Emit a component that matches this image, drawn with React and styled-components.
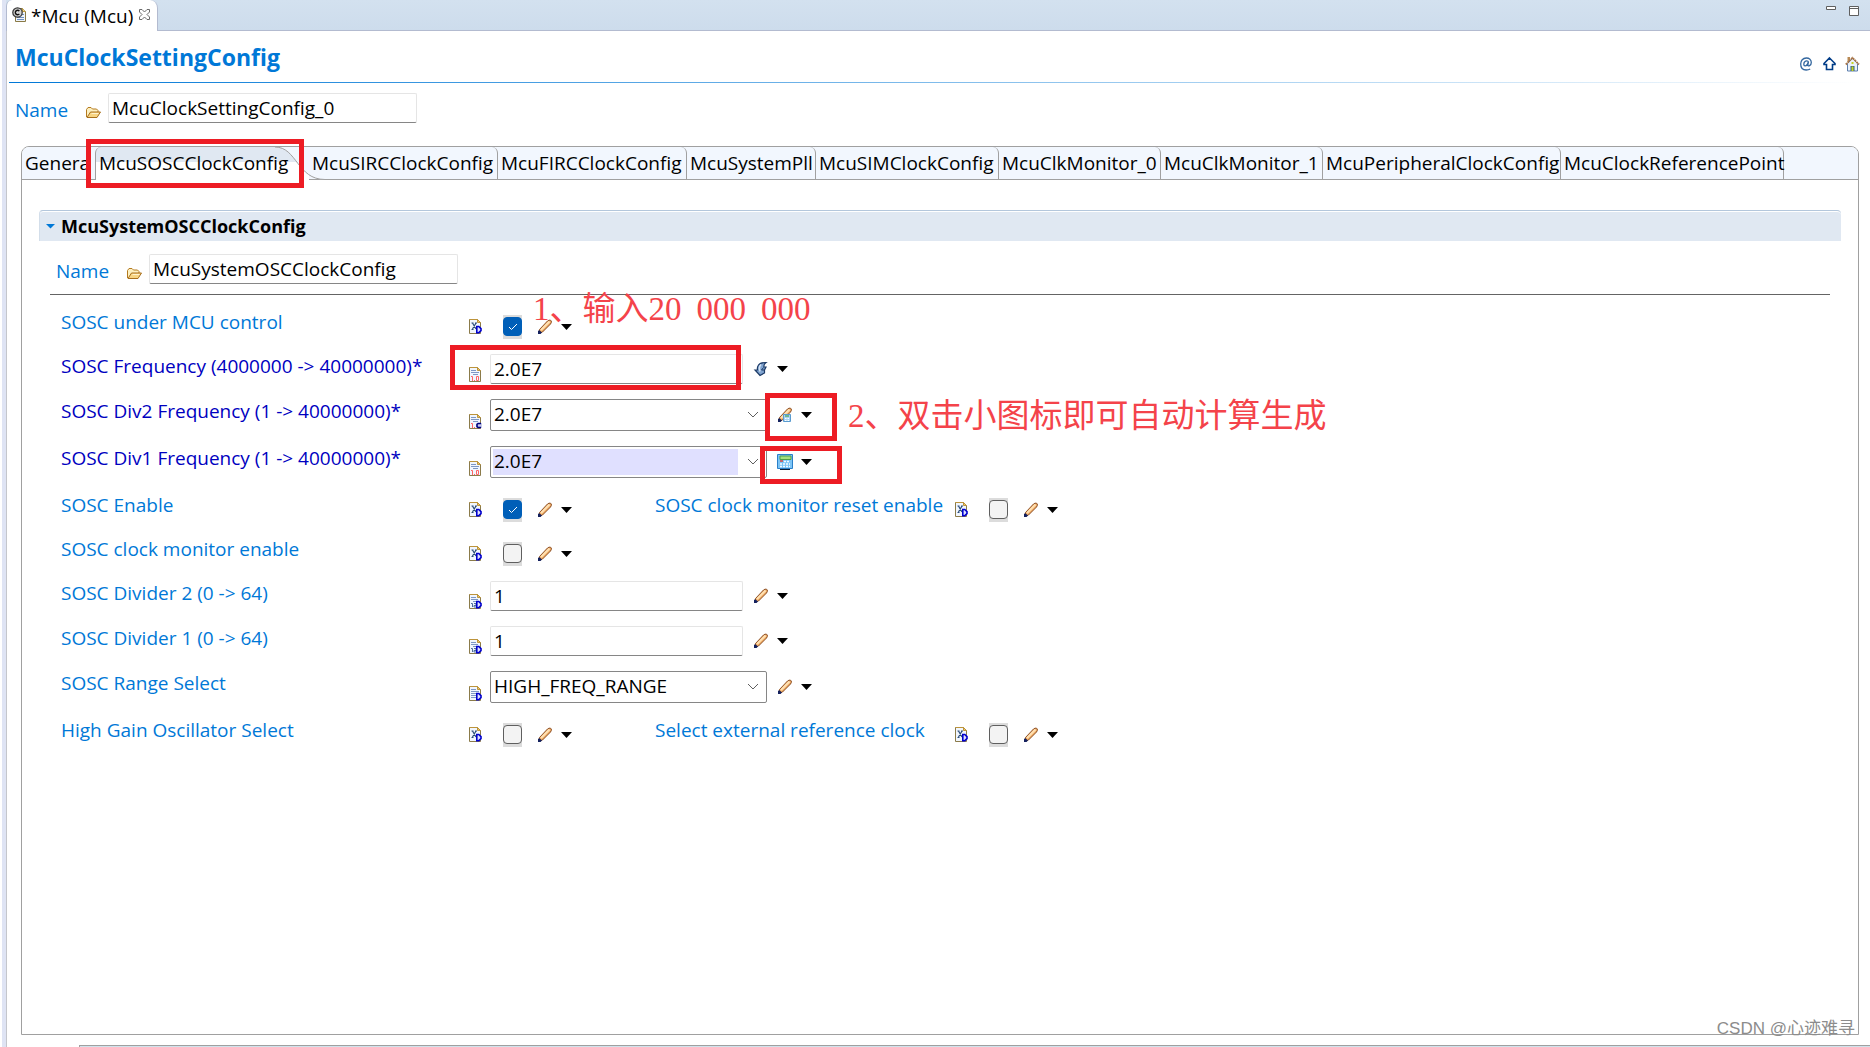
// src/App.jsx
import React, { useState } from "react";
import styled, { createGlobalStyle, ThemeProvider } from "styled-components";

const theme = {
  link: "#0078d7",
  required: "#0000c0",
  border: "#a0a0a0",
  tabBg: "#f2f7fe",
  tabActive: "#e0e8f2",
  mark: "#ed1c24",
  note: "#f4434a",
};

const GlobalStyle = createGlobalStyle`
  * {
    box-sizing: border-box;
  }

  body {
    margin: 0;
    background: #fff;
    color: #000;
    font-family: "Open Sans", "Noto Sans", "Noto Sans CJK SC", sans-serif;
    font-size: 19px;
    line-height: 28px;
  }

  button, input, select {
    font: inherit;
    color: inherit;
  }
`;

/* ---------- page frame ---------- */

const Page = styled.div`
  min-height: 100vh;
  display: flex;
  flex-direction: column;
  border-left: 2px solid #fff;
  overflow: hidden;
`;

const Editor = styled.main`
  flex: 1;
  display: flex;
  flex-direction: column;
  border-left: 4px solid #dfe4f4;
`;

const EditorBody = styled.div`
  flex: 1;
  display: flex;
  flex-direction: column;
  border-left: 1px solid #c4c6cc;
`;

const EditorBar = styled.div`
  display: flex;
  justify-content: space-between;
  height: 31px;
  background: linear-gradient(#d3e1ef, #cddcec);
  border-bottom: 1px solid #b3bbd0;
`;

const EditorTab = styled.div`
  display: flex;
  align-items: center;
  gap: 4px;
  width: 152px;
  height: 31px;
  padding: 0 0 2px 5px;
  background: #fff;
  border: 1px solid #b3bbd0;
  border-width: 0 1px 0 1px;
  border-radius: 6px 8px 0 0;
`;

const EditorName = styled.span`
  width: 104px;
  padding-top: 2px;
  white-space: nowrap;
`;

const IconButton = styled.button`
  display: flex;
  flex: none;
  padding: 0;
  border: 0;
  background: none;
  cursor: pointer;
`;

const WindowButtons = styled.div`
  display: flex;
  gap: 13px;
  padding: 6px 11px 0 0;
`;

const TitleRow = styled.header`
  display: flex;
  justify-content: space-between;
  height: 51px;
  padding: 8px 10px 0 8px;
`;

const Title = styled.h1`
  margin: 0;
  color: ${({ theme }) => theme.link};
  font-size: 23px;
  font-weight: 700;
  line-height: 36px;
`;

const TitleTools = styled.div`
  display: flex;
  gap: 8px;
  padding-top: 17px;
`;

const TitleRule = styled.div`
  height: 1px;
  margin: 0 10px 0 2px;
  background: linear-gradient(to right, ${({ theme }) => theme.link}, #fff);
`;

const StatusStrip = styled.div`
  height: 2px;
  margin: 10px 0 0 72px;
  border-top: 1px solid #a0a0a0;
  border-left: 1px solid #a0a0a0;
  background: #cfe3ec;
`;

/* ---------- name line ---------- */

const NameRow = styled.div`
  display: flex;
  gap: 7px;
  height: 30px;
  margin: ${({ $inner }) => ($inner ? "13px 0 0 17px" : "10px 0 0 8px")};
`;

const NameLabel = styled.label`
  width: 64px;
  padding-top: 3px;
  color: ${({ theme }) => theme.link};
`;

const NameIcon = styled.span`
  display: flex;
  width: 15px;
  padding-top: 13px;
`;

const TextBox = styled.input`
  width: ${({ $wide }) => ($wide ? "309px" : "253px")};
  height: 30px;
  padding: 0 3px 1px;
  border: 1px solid #e5e5e5;
  border-bottom-color: #868686;
  border-radius: 2px;
  background: #fff;
  outline: none;
`;

/* ---------- tab folder ---------- */

const Folder = styled.div`
  flex: 1;
  display: flex;
  flex-direction: column;
  margin: 23px 11px 0 14px;
  border: 1px solid ${({ theme }) => theme.border};
  border-radius: 8px 8px 0 0;
`;

const TabBar = styled.div`
  display: flex;
  height: 33px;
  border-bottom: 1px solid ${({ theme }) => theme.border};
  border-radius: 7px 7px 0 0;
  background: ${({ theme }) => theme.tabBg};
`;

const Tab = styled.button`
  position: relative;
  flex: none;
  width: ${({ $width }) => $width}px;
  height: 32px;
  padding: 0 0 1px 3px;
  border: 0;
  border-right: 1px solid ${({ theme }) => theme.border};
  border-top-right-radius: 6px;
  background: none;
  text-align: left;
  white-space: nowrap;
  cursor: pointer;
`;

const CutTab = styled(Tab)`
  flex: none;
  margin-right: 7px;
  border-right: 0;
  overflow: hidden;
`;

const ActiveTab = styled(Tab)`
  height: 33px;
  padding-bottom: 2px;
  border-right: 0;
  border-left: 1px solid ${({ theme }) => theme.border};
  border-top-left-radius: 6px;
  background: linear-gradient(
    ${({ theme }) => theme.tabActive} 15px,
    #fff 15px
  );
`;

const TabCurve = styled.svg`
  position: absolute;
  top: 0;
  right: -16px;
`;

const TabText = styled.span`
  position: relative;
`;

const Mark = styled.span`
  position: absolute;
  z-index: 2;
  left: ${({ $left }) => $left}px;
  top: ${({ $top }) => $top}px;
  width: ${({ $width }) => $width}px;
  height: ${({ $height }) => $height}px;
  border: 5px solid ${({ theme }) => theme.mark};
  pointer-events: none;
`;

const Note = styled.span`
  position: absolute;
  z-index: 3;
  left: ${({ $left }) => $left}px;
  top: ${({ $top }) => $top}px;
  display: flex;
  gap: 15px;
  color: ${({ theme }) => theme.note};
  font-family: "Liberation Serif", "Noto Sans CJK SC", serif;
  font-size: 33px;
  line-height: 36px;
  white-space: nowrap;
  pointer-events: none;
`;

/* ---------- section ---------- */

const Section = styled.section`
  padding: 30px 17px 0 17px;
`;

const SectionHead = styled.h2`
  display: flex;
  align-items: center;
  gap: 6px;
  height: 31px;
  margin: 0;
  padding-left: 6px;
  border-top: 1px solid #b4c7dc;
  border-left: 1px solid #d3deea;
  border-radius: 4px 4px 0 0;
  background: ${({ theme }) => theme.tabActive};
  box-shadow: inset 0 1px #fff;
  font-size: 18px;
  font-weight: 700;
`;

const Rule = styled.hr`
  height: 1px;
  margin: 10px 11px 8px;
  border: 0;
  background: #646464;
`;

const rowHeights = { check: 44, text: 45, combo: 47 };

const Row = styled.div`
  display: flex;
  height: ${({ $kind }) => rowHeights[$kind]}px;
  padding-left: 22px;
`;

const Label = styled.label`
  flex: none;
  width: ${({ $second }) => ($second ? 300 : 408)}px;
  padding-top: 5px;
  color: ${({ theme, $required }) => ($required ? theme.required : theme.link)};
  white-space: nowrap;
`;

const Control = styled.div`
  position: relative;
  display: flex;
  align-items: flex-start;
  flex: none;
  min-width: 186px;
  padding-top: 7px;
`;

const docOffsets = { check: 9, text: 13, combo: 15 };

const DocIcon = styled.span`
  display: flex;
  width: 21px;
  padding-top: ${({ $kind }) => docOffsets[$kind]}px;
`;

const toolMargins = {
  check: "9px 0 0 15px",
  text: "7px 0 0 10px",
  combo: "8px 0 0 10px",
};

const Tools = styled.span`
  display: flex;
  align-items: center;
  gap: 8px;
  height: 16px;
  margin: ${({ $kind }) => toolMargins[$kind]};
`;

const CheckWrap = styled.span`
  position: relative;
  display: flex;
  width: 19px;
  height: 24px;
  margin: 5px 0 0 13px;
  padding-top: 2px;
  background: #dcdcdc;
`;

const CheckBox = styled.input`
  appearance: none;
  width: 19px;
  height: 19px;
  margin: 0;
  border: 1px solid #5f5f5f;
  border-radius: 4px;
  background: #f3f3f3;

  &:checked {
    border-color: #005fb8;
    background: #005fb8;
  }
`;

const CheckTick = styled.svg`
  position: absolute;
  left: 5px;
  top: 8px;
  pointer-events: none;
`;

const ComboWrap = styled.span`
  position: relative;
  display: flex;
`;

const Combo = styled.select`
  appearance: none;
  width: 277px;
  height: 32px;
  padding: 0 30px 2px 3px;
  border: 1px solid #868686;
  border-radius: 2px;
  outline: none;
  background: ${({ $picked }) =>
    $picked
      ? "linear-gradient(#e0e0ff, #e0e0ff) 2px 2px / 245px 26px no-repeat #fff"
      : "#fff"};
`;

const ComboArrow = styled.svg`
  position: absolute;
  right: 8px;
  top: 12px;
  pointer-events: none;
`;

const Watermark = styled.span`
  position: absolute;
  right: 15px;
  bottom: 5px;
  color: #8c8c8c;
  font-family: "Liberation Sans", "Noto Sans CJK SC", sans-serif;
  font-size: 17px;
  line-height: 26px;
`;

/* ---------- icons ---------- */

const FileIcon = () => (
  <svg width="15" height="16" viewBox="0 0 15 16">
    <path d="M3.500 1.500h7l3 3v10h-10z" fill="#eef3fb" stroke="#8a7a45" />
    <path d="M10.500 1.500v3h3" fill="#f3d98b" stroke="#c19a3c" />
    <path d="M5 10.500h7M5 12.500h7M10 7.500h2" stroke="#6e8fc0" />
    <circle cx="5.500" cy="5.500" r="4.700" fill="#d4d4d4" stroke="#3b3b3b" strokeWidth="1.300" />
    <path d="M7.300 4.200a2.200 2.200 0 1 0 0 2.600" fill="none" stroke="#111" strokeWidth="1.400" />
  </svg>
);

const CloseIcon = () => (
  <svg width="11" height="11" viewBox="0 0 11 11">
    <path
      d="M.5.5h2.500L5.500 3 8 .5h2.500V3L8 5.500 10.500 8v2.500H8L5.500 8 3 10.500H.5V8L3 5.500.5 3z"
      fill="#fff"
      stroke="#6a6a6a"
    />
  </svg>
);

const FolderIcon = () => (
  <svg width="15" height="13" viewBox="0 0 15 13">
    <path d="M.5 11v-7.500l1.500-2h3l1.500 1.500h4l1.500 1.500v1.500" fill="#fdf0c0" stroke="#b47a1f" />
    <path d="M1 11.500l3.500-5.500h10l-3.500 5.500z" fill="#f8d583" stroke="#a86f1c" />
    <path d="M5.500 7.500h7" stroke="#fff3cf" />
  </svg>
);

const AtIcon = () => (
  <svg width="15" height="16" viewBox="0 0 15 16">
    <path
      d="M9.500 5.500c-3-1.500-4.700.5-4.700 2.700s2 2.300 3.500.3l1.200-3-.7 3.500c0 1.700 3.500.8 3.500-2.500 0-3-2-4.500-5-4.500C3.800 2 1.700 4.600 1.700 8s2 6 5.500 6c1.600 0 3-.4 4-1"
      fill="none"
      stroke="#33679f"
      strokeWidth="1.300"
    />
  </svg>
);

const UpIcon = () => (
  <svg width="15" height="16" viewBox="0 0 15 16">
    <path d="M7.500 2L13 7.500v1h-2.500v5h-6v-5H2v-1z" fill="#fff" stroke="#003c87" strokeWidth="1.600" />
  </svg>
);

const HomeIcon = () => (
  <svg width="15" height="16" viewBox="0 0 15 16">
    <path d="M2.500 1h2.500v5H2.500z" fill="#b98a55" />
    <path d="M2.500 7.500l5-5 5 5v7.500h-10z" fill="#eaf1fa" stroke="#5c7fae" />
    <path d="M.8 8.500L7.500 1.800l6.500 6.700" fill="none" stroke="#a8764a" strokeWidth="1.800" strokeDasharray="2 .5" />
    <path d="M5.500 10h4v5h-4z" fill="#2b5a86" />
    <path d="M6.500 10.500h2V15h-2zM6.500 6h2v2h-2z" fill="#c8d422" />
  </svg>
);

// the small letter on the corner of a document icon
const Badge = ({ kind }) =>
  kind === "C" ? (
    <>
      <path d="M7 9h6v5H7z" fill="#c6cbea" />
      <path d="M12 9.500H9l-1 1v2l1 1h3" fill="none" stroke="#000080" strokeWidth="1.600" />
    </>
  ) : (
    <path d="M7.800 7.500v6.200h2l2.200-2V9.700L9.800 7.500z" fill="#dfe0ff" stroke="#0000cd" strokeWidth="1.600" />
  );

const Doc = ({ type, badge }) => (
  <svg width="14" height="15" viewBox="0 0 14 15">
    <path d="M.5.5h8l3 3v11H.5z" fill="#f1f6fe" stroke="#8b7b4a" />
    <path d="M8.500.5l3 3h-3z" fill="#efc869" />
    <path d="M.5.5h8l3 3h-3v-3" fill="none" stroke="#bd943b" />
    {type === "bool" && (
      <path d="M3.500 4L7 10M7 4l-3.500 6M2.500 4h2M6 4h2M2.500 10.500h2" stroke="#2a4c78" strokeWidth="1.200" />
    )}
    {type === "float" && (
      <>
        <path d="M2 3.500h5M2 5.500h8M4 7.500h5" stroke="#7d97c4" />
        <path d="M2 9.500h1.500V14M5 13.500h1" fill="none" stroke="#ff6464" />
        <path d="M7.500 9.500h2v4h-2z" fill="none" stroke="#ff6464" />
      </>
    )}
    {type === "int" && (
      <>
        <path d="M2 3.500h5M2 5.500h7M4 7.500h5" stroke="#7d97c4" />
        <path d="M2 9.500h1.500V13M5 9.500h2v2H5v1.500h2.500" fill="none" stroke="#4f6e9c" />
      </>
    )}
    {type === "enum" && (
      <path d="M2 3.500h5M2 5.500h8M2 7.500h8M2 9.500h6M2 11.500h6" stroke="#7d97c4" />
    )}
    {badge && <Badge kind={badge} />}
  </svg>
);

const PencilBody = () => (
  <>
    <path
      d="M2.500 10.500L10.500 2l1.500-.8h1.500l.8.8v1.500L13.500 5l-8 8-2 .8-1.500-1z"
      fill="#f3b06a"
      stroke="#8a4b1f"
    />
    <path d="M4 11l8.500-8.500" stroke="#ffe2b4" strokeWidth="1.800" />
    <path d="M1 15v-3l1.500-.8L5 13.500 3.500 15z" fill="#14215e" />
  </>
);

const Pencil = () => (
  <svg width="16" height="16" viewBox="0 0 16 16">
    <PencilBody />
  </svg>
);

const PencilCalc = () => (
  <svg width="16" height="16" viewBox="0 0 16 16">
    <PencilBody />
    <path d="M6.500 7.500h7v7h-7z" fill="#a9d3f2" stroke="#5a9bcf" />
    <path d="M8 9h4" stroke="#5fae6d" strokeWidth="1.500" />
    <path d="M8 11.500h4M8 13.500h4" stroke="#fff" strokeDasharray="1 .5" />
  </svg>
);

const Calculator = () => (
  <svg width="16" height="16" viewBox="0 0 16 16">
    <path d="M.5.5h15v14H.5z" fill="#7cc4f6" stroke="#2b80c9" />
    <path d="M3 2h11v3.500H3z" fill="#a5df7c" stroke="#4f9d48" />
    <path d="M3 7h3" stroke="#d8483e" strokeWidth="1.500" />
    <path d="M7 7.500h6M3 10h10M3 12.500h10" stroke="#f4fbff" strokeWidth="1.500" strokeDasharray="2 1" />
    <path d="M3 15.500h10" stroke="#0d1f33" />
  </svg>
);

const Inherit = () => (
  <svg width="16" height="16" viewBox="0 0 16 16">
    <path
      d="M5.500 4C7 1.800 10 1.500 13 1.500c-2 1.500-2.500 2.500-2 4.500h2L11.500 9v3L7 14.500 2 9h2.500C4 7 4.500 5.500 5.500 4z"
      fill="#7fa3cf"
      stroke="#1c3a66"
      strokeWidth="1.200"
    />
    <path d="M8 3.500c-1.500 1.500-2 4-1 7" fill="none" stroke="#d4e3f4" strokeWidth="1.500" />
    <path d="M10.500 6.500L8.500 9h2.500" fill="none" stroke="#1c3a66" />
  </svg>
);

const Arrow = () => (
  <svg width="11" height="6" viewBox="0 0 11 6">
    <path d="M0 0h11L5.500 6z" fill="#000" />
  </svg>
);

const toolIcons = { pencil: Pencil, pencilCalc: PencilCalc, calc: Calculator, inherit: Inherit };

/* ---------- data ---------- */

const tabs = [
  { name: "McuSIRCClockConfig", width: 189 },
  { name: "McuFIRCClockConfig", width: 189 },
  { name: "McuSystemPll", width: 129 },
  { name: "McuSIMClockConfig", width: 183 },
  { name: "McuClkMonitor_0", width: 162 },
  { name: "McuClkMonitor_1", width: 162 },
  { name: "McuPeripheralClockConfig", width: 238 },
  { name: "McuClockReferencePoint", width: 223 },
];

const rows = [
  {
    kind: "check",
    fields: [{ id: "control", label: "SOSC under MCU control", checked: true }],
    note: { left: 64, top: -12, parts: ["1、输入20", "000", "000"] },
  },
  {
    kind: "text",
    fields: [
      {
        id: "freq",
        label: "SOSC Frequency (4000000 -> 40000000)*",
        required: true,
        doc: "float",
        badge: null,
        value: "2.0E7",
        tool: "inherit",
      },
    ],
    mark: { left: -19, top: -2, width: 291, height: 45 },
  },
  {
    kind: "combo",
    fields: [
      {
        id: "div2freq",
        label: "SOSC Div2 Frequency (1 -> 40000000)*",
        required: true,
        doc: "float",
        badge: "C",
        value: "2.0E7",
        tool: "pencilCalc",
      },
    ],
    mark: { left: 296, top: 1, width: 72, height: 48 },
    note: { left: 379, top: 6, parts: ["2、双击小图标即可自动计算生成"] },
  },
  {
    kind: "combo",
    fields: [
      {
        id: "div1freq",
        label: "SOSC Div1 Frequency (1 -> 40000000)*",
        required: true,
        doc: "float",
        badge: null,
        value: "2.0E7",
        tool: "calc",
        picked: true,
      },
    ],
    mark: { left: 291, top: 7, width: 82, height: 38 },
  },
  {
    kind: "check",
    fields: [
      { id: "enable", label: "SOSC Enable", checked: true },
      { id: "reset", label: "SOSC clock monitor reset enable" },
    ],
  },
  { kind: "check", fields: [{ id: "monitor", label: "SOSC clock monitor enable" }] },
  { kind: "text", fields: [{ id: "div2", label: "SOSC Divider 2 (0 -> 64)", doc: "int", value: "1" }] },
  { kind: "text", fields: [{ id: "div1", label: "SOSC Divider 1 (0 -> 64)", doc: "int", value: "1" }] },
  {
    kind: "combo",
    fields: [{ id: "range", label: "SOSC Range Select", doc: "enum", value: "HIGH_FREQ_RANGE" }],
  },
  {
    kind: "check",
    fields: [
      { id: "gain", label: "High Gain Oscillator Select" },
      { id: "external", label: "Select external reference clock" },
    ],
  },
];

/* ---------- form parts ---------- */

const CheckField = ({ id, initial }) => {
  const [checked, setChecked] = useState(!!initial);
  return (
    <CheckWrap>
      <CheckBox
        id={id}
        type="checkbox"
        checked={checked}
        onChange={(e) => setChecked(e.target.checked)}
      />
      {checked && (
        <CheckTick width="10" height="8" viewBox="0 0 10 8">
          <path d="M1 4l2.500 2.500L9 1" fill="none" stroke="#fff" />
        </CheckTick>
      )}
    </CheckWrap>
  );
};

const ComboField = ({ id, value, picked }) => (
  <ComboWrap>
    <Combo id={id} defaultValue={value} $picked={picked}>
      <option>{value}</option>
    </Combo>
    <ComboArrow width="12" height="8" viewBox="0 0 12 8">
      <path d="M1 1l5 5 5-5" fill="none" stroke="#5f5f5f" />
    </ComboArrow>
  </ComboWrap>
);

const Field = ({ kind, field, children }) => {
  const ToolIcon = toolIcons[field.tool || "pencil"];
  const badge = field.badge === undefined ? "D" : field.badge;
  return (
    <Control>
      <DocIcon $kind={kind}>
        <Doc type={field.doc || "bool"} badge={badge} />
      </DocIcon>
      {kind === "check" && <CheckField id={field.id} initial={field.checked} />}
      {kind === "text" && <TextBox id={field.id} defaultValue={field.value} />}
      {kind === "combo" && (
        <ComboField id={field.id} value={field.value} picked={field.picked} />
      )}
      <Tools $kind={kind}>
        <IconButton aria-label="Edit">
          <ToolIcon />
        </IconButton>
        <IconButton aria-label="More">
          <Arrow />
        </IconButton>
      </Tools>
      {children}
    </Control>
  );
};

const NameLine = ({ id, value, inner }) => (
  <NameRow $inner={inner}>
    <NameLabel htmlFor={id}>Name</NameLabel>
    <NameIcon>
      <FolderIcon />
    </NameIcon>
    <TextBox id={id} $wide defaultValue={value} />
  </NameRow>
);

const App = () => {
  return (
    <ThemeProvider theme={theme}>
      <GlobalStyle />
      <Page>
        <Editor>
          <EditorBar>
            <EditorTab>
              <FileIcon />
              <EditorName>*Mcu (Mcu)</EditorName>
              <IconButton aria-label="Close">
                <CloseIcon />
              </IconButton>
            </EditorTab>
            <WindowButtons>
              <IconButton aria-label="Minimize">
                <svg width="10" height="10" viewBox="0 0 10 10">
                  <path d="M.5.5h9v3h-9z" fill="#fff" stroke="#5f5f5f" />
                </svg>
              </IconButton>
              <IconButton aria-label="Maximize">
                <svg width="10" height="10" viewBox="0 0 10 10">
                  <path d="M.5.5h9v9h-9zM.5 2.500h9" fill="#fff" stroke="#5f5f5f" />
                </svg>
              </IconButton>
            </WindowButtons>
          </EditorBar>

          <EditorBody>
            <TitleRow>
              <Title>McuClockSettingConfig</Title>
              <TitleTools>
                <IconButton aria-label="Mail">
                  <AtIcon />
                </IconButton>
                <IconButton aria-label="Up">
                  <UpIcon />
                </IconButton>
                <IconButton aria-label="Home">
                  <HomeIcon />
                </IconButton>
              </TitleTools>
            </TitleRow>
            <TitleRule />

            <NameLine id="config-name" value="McuClockSettingConfig_0" />

            <Folder>
              <TabBar>
                <CutTab $width={66}>General</CutTab>
                <ActiveTab $width={214}>
                  <TabCurve width="50" height="33" viewBox="0 0 50 33">
                    <path d="M0 0C22 0 22 32.500 50 32.500V0z" fill="#f2f7fe" />
                    <path d="M0 0C22 0 22 32.500 50 32.500" fill="none" stroke="#a0a0a0" />
                  </TabCurve>
                  <TabText>McuSOSCClockConfig</TabText>
                  <Mark $left={-10} $top={-8} $width={218} $height={49} />
                </ActiveTab>
                {tabs.map((tab) => (
                  <Tab key={tab.name} $width={tab.width}>
                    <TabText>{tab.name}</TabText>
                  </Tab>
                ))}
              </TabBar>

              <Section>
                <SectionHead>
                  <svg width="9" height="5" viewBox="0 0 9 5">
                    <path d="M0 0h9L4.500 4.500z" fill="#0078d7" />
                  </svg>
                  McuSystemOSCClockConfig
                </SectionHead>
                <NameLine id="osc-name" value="McuSystemOSCClockConfig" inner />
                <Rule />
                {rows.map(({ kind, fields, mark, note }) => (
                  <Row key={fields[0].id} $kind={kind}>
                    {fields.map((field, i) => (
                      <React.Fragment key={field.id}>
                        <Label htmlFor={field.id} $required={field.required} $second={i > 0}>
                          {field.label}
                        </Label>
                        <Field kind={kind} field={field}>
                          {mark && (
                            <Mark
                              $left={mark.left}
                              $top={mark.top}
                              $width={mark.width}
                              $height={mark.height}
                            />
                          )}
                          {note && (
                            <Note $left={note.left} $top={note.top}>
                              {note.parts.map((part, n) => (
                                <span key={n}>{part}</span>
                              ))}
                            </Note>
                          )}
                        </Field>
                      </React.Fragment>
                    ))}
                  </Row>
                ))}
              </Section>
            </Folder>
            <StatusStrip />
          </EditorBody>
        </Editor>
        <Watermark>CSDN @心迹难寻</Watermark>
      </Page>
    </ThemeProvider>
  );
};

export default App;
